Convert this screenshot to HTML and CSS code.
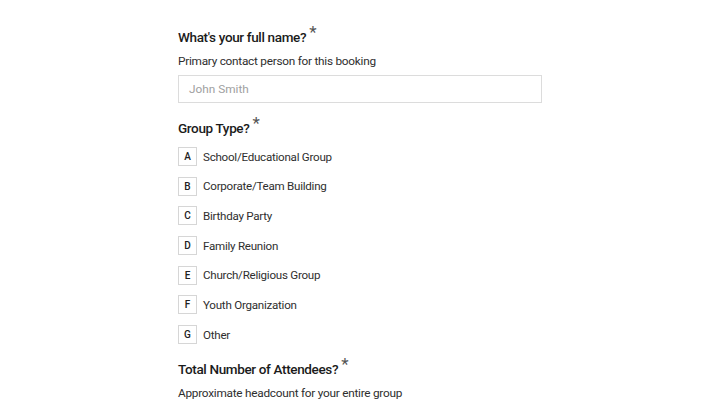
FILE: index.html
```html
<!DOCTYPE html>
<html lang="en">
<head>
<meta charset="utf-8">
<link rel="stylesheet" href="styles.css">
</head>
<body>
<main class="form">
  <section class="field">
    <h2 class="q">What's your full name?<span class="req">*</span></h2>
    <p class="desc">Primary contact person for this booking</p>
    <div class="input">John Smith</div>
  </section>
  <section class="field">
    <h2 class="q">Group Type?<span class="req">*</span></h2>
    <ul class="opts">
      <li class="opt"><span class="key">A</span><span class="lbl">School/Educational Group</span></li>
      <li class="opt"><span class="key">B</span><span class="lbl">Corporate/Team Building</span></li>
      <li class="opt"><span class="key">C</span><span class="lbl">Birthday Party</span></li>
      <li class="opt"><span class="key">D</span><span class="lbl">Family Reunion</span></li>
      <li class="opt"><span class="key">E</span><span class="lbl">Church/Religious Group</span></li>
      <li class="opt"><span class="key">F</span><span class="lbl">Youth Organization</span></li>
      <li class="opt"><span class="key">G</span><span class="lbl">Other</span></li>
    </ul>
  </section>
  <section class="field">
    <h2 class="q">Total Number of Attendees?<span class="req">*</span></h2>
    <p class="desc">Approximate headcount for your entire group</p>
  </section>
</main>
</body>
</html>
```
FILE: styles.css
```css
html, body {
  margin: 0;
  padding: 0;
  background: #ffffff;
}
body {
  font-family: Roboto, "Liberation Sans", sans-serif;
  color: #222;
  width: 720px;
  height: 405px;
  overflow: hidden;
}
.form {
  width: 364px;
  margin-left: 178px;
  padding-top: 27px;
  display: flex;
  flex-direction: column;
  gap: 15px;
}
.field {
  display: flex;
  flex-direction: column;
}
.q {
  margin: 0;
  font-size: 13.5px;
  font-weight: 500;
  letter-spacing: -0.35px;
  color: #1b1b1b;
  line-height: 20px;
  display: flex;
  align-items: flex-start;
}
.req {
  font-size: 17px;
  font-weight: 400;
  color: #555;
  margin-left: 3px;
  line-height: 14px;
  position: relative;
  top: -2px;
}
.desc {
  margin: 6px 0 0;
  font-size: 11.8px;
  letter-spacing: -0.25px;
  line-height: 16px;
  color: #2e2e2e;
}
.input {
  margin-top: 6px;
  height: 28px;
  box-sizing: border-box;
  border: 1px solid #dcdcdc;
  padding: 0 10px;
  display: flex;
  align-items: center;
  font-size: 11.8px;
  color: #a0a0a0;
}
.opts {
  list-style: none;
  margin: 9px 0 0;
  padding: 0;
  display: flex;
  flex-direction: column;
  gap: 10.7px;
}
.opt {
  display: flex;
  align-items: center;
  gap: 6px;
  height: 19px;
}
.key {
  width: 19px;
  height: 19px;
  box-sizing: border-box;
  border: 1px solid #d6d6d6;
  display: flex;
  align-items: center;
  justify-content: center;
  font-size: 10px;
  font-weight: 500;
  color: #222;
}
.lbl {
  font-size: 11.6px;
  letter-spacing: -0.25px;
  color: #2e2e2e;
}
```
